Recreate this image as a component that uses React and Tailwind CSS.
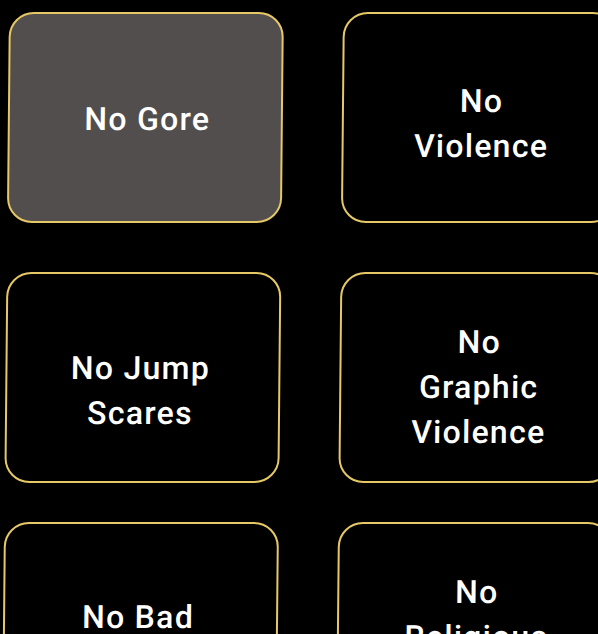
import React, { useState } from "react";

const options = [
  { name: "No Gore", lines: ["No Gore"], pad: "pt-[3px]" },
  { name: "No Violence", lines: ["No", "Violence"], pad: "pt-[12px]" },
  { name: "No Jump Scares", lines: ["No Jump", "Scares"], pad: "pt-[26px] pr-[9px] mt-[10px]" },
  { name: "No Graphic Violence", lines: ["No", "Graphic", "Violence"], pad: "pt-[20px] mt-[10px]" },
  { name: "No Bad Language", lines: ["No Bad", "Language"], pad: "pt-[24px] pr-[9px]" },
  { name: "No Religious Themes", lines: ["No", "Religious", "Themes"], pad: "pt-[20px]" },
];

const App = () => {
  const [picked, setPicked] = useState(["No Gore"]);

  const toggle = (name) => {
    setPicked((p) => (p.includes(name) ? p.filter((x) => x !== name) : [...p, name]));
  };

  return (
    <div className="w-[598px] h-[634px] overflow-hidden bg-black">
      <div className="grid grid-cols-[275px_275px] gap-x-[59px] gap-y-[39px] pl-[9px] pt-[12px] origin-top-left -skew-x-[0.55deg]">
        {options.map((opt) => {
          const on = picked.includes(opt.name);
          return (
            <button
              key={opt.name}
              onClick={() => toggle(opt.name)}
              className={
                "h-[211px] rounded-[25px] border-[2.5px] border-[#e6c866] flex flex-col items-center justify-center text-white text-[32px] leading-[45px] font-medium tracking-[0.04em] font-['Roboto',sans-serif] " +
                opt.pad +
                " " +
                (on ? "bg-[#524e4e]" : "bg-black")
              }
            >
              {opt.lines.map((l) => (
                <span key={l} className="pl-[4px]">{l}</span>
              ))}
            </button>
          );
        })}
      </div>
    </div>
  );
};

export default App;
